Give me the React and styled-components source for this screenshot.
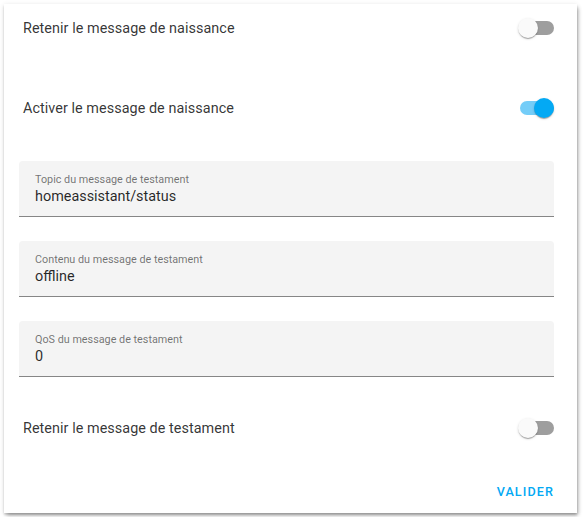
import React, { useState } from "react";
import styled, { createGlobalStyle } from "styled-components";

const Global = createGlobalStyle`
    body {
        margin: 0;
        background: #fff;
        font-family: Roboto, "Noto Sans", sans-serif;
    }
`;

function App(){
    const [retainBirth, setRetainBirth] = useState(false);
    const [birth, setBirth] = useState(true);
    const [retainWill, setRetainWill] = useState(false);

    const fields = [
        {label: "Topic du message de testament", value: "homeassistant/status"},
        {label: "Contenu du message de testament", value: "offline"},
        {label: "QoS du message de testament", value: "0"},
    ];

    return(
        <Page>
            <Global />
            <Card>
                <Row>
                    <RowLabel>Retenir le message de naissance</RowLabel>
                    <Switch on={retainBirth} onClick={() => setRetainBirth(!retainBirth)}>
                        <Thumb on={retainBirth} />
                    </Switch>
                </Row>
                <Row spaced>
                    <RowLabel>Activer le message de naissance</RowLabel>
                    <Switch on={birth} onClick={() => setBirth(!birth)}>
                        <Thumb on={birth} />
                    </Switch>
                </Row>
                <Fields>
                    {fields.map((f) => (
                        <Field key={f.label}>
                            <FieldLabel>{f.label}</FieldLabel>
                            <FieldValue>{f.value}</FieldValue>
                        </Field>
                    ))}
                </Fields>
                <Row>
                    <RowLabel>Retenir le message de testament</RowLabel>
                    <Switch on={retainWill} onClick={() => setRetainWill(!retainWill)}>
                        <Thumb on={retainWill} />
                    </Switch>
                </Row>
                <Actions>
                    <TextButton>Valider</TextButton>
                </Actions>
            </Card>
        </Page>
    );
}
export default App;

const Page = styled.div`
    padding: 4px;
`;
const Card = styled.div`
    width: 573px;
    height: 509px;
    box-sizing: border-box;
    background: #fff;
    padding: 0 23px 0 15px;
    display: flex;
    flex-direction: column;
    box-shadow: 0 2px 2px 0 rgba(0,0,0,0.14), 0 1px 5px 0 rgba(0,0,0,0.12), 2px 3px 4px -1px rgba(0,0,0,0.3);
`;
const Row = styled.div`
    height: 48px;
    display: flex;
    align-items: center;
    justify-content: space-between;
    padding-left: 4px;
    margin-top: ${(p) => (p.spaced ? "32px" : "0")};
`;
const RowLabel = styled.span`
    font-size: 14.4px;
    letter-spacing: 0.05px;
    color: rgba(0,0,0,0.8);
`;
const Switch = styled.div`
    position: relative;
    width: 34px;
    height: 14px;
    border-radius: 7px;
    background: ${(p) => (p.on ? "#74cdf8" : "#9e9e9e")};
    cursor: pointer;
`;
const Thumb = styled.span`
    position: absolute;
    top: -3px;
    left: ${(p) => (p.on ? "14px" : "-2px")};
    width: 20px;
    height: 20px;
    border-radius: 50%;
    background: ${(p) => (p.on ? "#03a9f4" : "#fafafa")};
    box-shadow: 0 2px 1px -1px rgba(0,0,0,0.2), 0 1px 1px 0 rgba(0,0,0,0.14), 0 1px 3px 0 rgba(0,0,0,0.12);
`;
const Fields = styled.div`
    display: flex;
    flex-direction: column;
    gap: 24px;
    margin: 29px 0 27px;
`;
const Field = styled.div`
    height: 56px;
    box-sizing: border-box;
    background: #f4f4f4;
    border-radius: 4px 4px 0 0;
    border-bottom: 1px solid rgba(0,0,0,0.45);
    padding: 12px 16px 0;
    display: flex;
    flex-direction: column;
`;
const FieldLabel = styled.span`
    font-size: 10.8px;
    line-height: 14px;
    color: rgba(0,0,0,0.55);
`;
const FieldValue = styled.span`
    font-size: 14.4px;
    line-height: 20px;
    color: rgba(0,0,0,0.85);
`;
const Actions = styled.div`
    margin-top: 21px;
    display: flex;
    justify-content: flex-end;
`;
const TextButton = styled.button`
    height: 36px;
    border: none;
    background: none;
    padding: 0;
    font-family: Roboto, sans-serif;
    font-weight: 500;
    font-size: 12.6px;
    letter-spacing: 1.1px;
    text-transform: uppercase;
    color: #03a9f4;
    cursor: pointer;
`;
